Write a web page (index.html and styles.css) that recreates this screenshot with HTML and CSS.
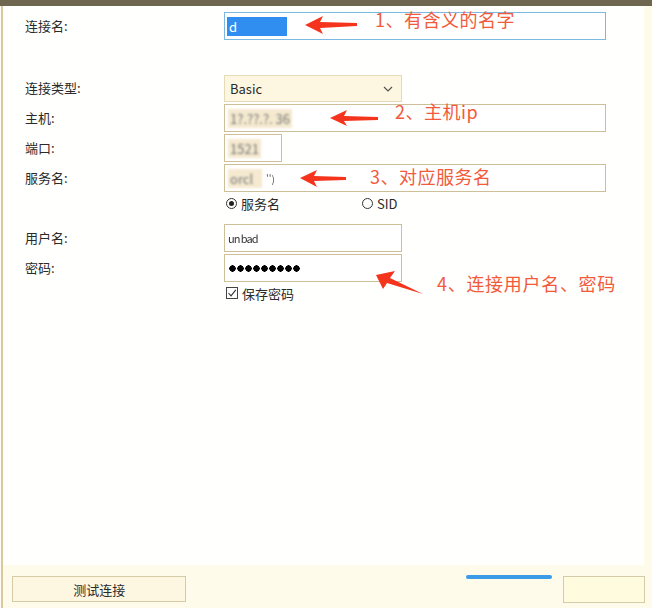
FILE: index.html
```html
<!DOCTYPE html>
<html lang="zh-CN">
<head>
  <meta charset="utf-8" />
  <title>新建连接</title>
  <link rel="stylesheet" href="styles.css">
</head>
<body>
  <div class="topbar"></div>
  <div class="window">
    <div class="panel">
      <form class="form">
        <div class="row first">
          <label>连接名:</label>
          <div class="field wide focus"><span class="sel">d</span></div>
        </div>

        <div class="row gap-big">
          <label>连接类型:</label>
          <div class="field select">
            <span>Basic</span>
            <svg class="chev" width="10" height="6" viewBox="0 0 10 6"><path d="M1 1 L5 5 L9 1" fill="none" stroke="#555" stroke-width="1.2"/></svg>
          </div>
        </div>
        <div class="row">
          <label>主机:</label>
          <div class="field wide"><span class="blur">1?.??.?. 36</span></div>
        </div>
        <div class="row">
          <label>端口:</label>
          <div class="field port"><span class="blur">1521</span></div>
        </div>
        <div class="row">
          <label>服务名:</label>
          <div class="field wide"><span class="blur short">orcl</span><span class="tick">'')</span></div>
        </div>
        <div class="row opts">
          <label></label>
          <div class="choices">
            <span class="radio on"></span><span class="opt">服务名</span>
            <span class="radio sid"></span><span class="opt">SID</span>
          </div>
        </div>

        <div class="row gap-mid">
          <label>用户名:</label>
          <div class="field mid"><span class="user">un bad</span></div>
        </div>
        <div class="row">
          <label>密码:</label>
          <div class="field mid"><span class="dots"></span></div>
        </div>
        <div class="row opts">
          <label></label>
          <div class="choices">
            <span class="check"><svg width="10" height="10" viewBox="0 0 10 10"><path d="M1.5 5 L4 7.8 L8.8 1.8" fill="none" stroke="#333" stroke-width="1.1"/></svg></span><span class="opt">保存密码</span>
          </div>
        </div>
      </form>
    </div>
    <div class="strip"></div>
  </div>

  <div class="footer">
    <button class="btn test">测试连接</button>
    <div class="progress"></div>
    <button class="btn ok"></button>
  </div>

  <svg class="notes" width="652" height="608" viewBox="0 0 652 608">
    <g fill="#f4341c">
      <polygon points="305,25 323,16 320,22 357,23 357,26 320,28 323,34"/>
      <polygon points="330,118 347,110 344,116 378,117 378,120 344,121 347,126"/>
      <polygon points="300,178 317,170 314,176 346,177 346,180 314,181 317,187"/>
      <polygon points="376,275 395,271 390,278 423,294 387,283 383,289"/>
    </g>
    <g class="note-text" fill="#f25a3c">
      <text x="375" y="27">1、有含义的名字</text>
      <text x="395" y="119">2、主机ip</text>
      <text x="370" y="184">3、对应服务名</text>
      <text x="437" y="291" class="wide-note">4、连接用户名、密码</text>
    </g>
  </svg>
</body>
</html>
```

FILE: styles.css
```css
:root{
  --label-col:199px;
  --border:#cdbf98;
  --cream:#fdf6e0;
  --text:#2a2a2a;
}

html,body{height:100%}
body{
  margin:0; width:652px; height:608px; overflow:hidden; position:relative;
  font-family:"Noto Sans CJK SC","Noto Sans",sans-serif;
  font-size:13px; color:var(--text);
  background:#fffdf6;
  display:flex; flex-direction:column;
}

.topbar{ height:6px; background:#6f6650; flex:none; }

.window{
  flex:1; display:flex;
  border-left:2px solid #d9c99c; margin-left:1px;
  background:#fffffd;
}
.panel{ flex:1; }
.strip{ width:8px; background:#fffbea; }

.form{ display:flex; flex-direction:column; padding:6px 0 0 22px; gap:2px; }

.row{ display:grid; grid-template-columns:var(--label-col) 1fr; align-items:center; }
.row label{ line-height:28px; }
.row.gap-big{ margin-top:32px; }
.row.gap-mid{ margin-top:9px; }
.row.opts{ height:20px; margin-top:-1px; }

.field{
  height:28px; box-sizing:border-box;
  border:1px solid var(--border); background:#fff;
  display:flex; align-items:center; padding:0 3px;
}
.field.wide{ width:382px; }
.field.mid{ width:178px; }
.field.port{ width:58px; }
.field.focus{ border-color:#7cb9e2; padding:0 2px; }
.field.select{
  width:178px; height:27px; background:var(--cream); border-color:#e6dbb8;
  justify-content:space-between; padding:0 8px 0 5px;
}
.chev{ margin-top:1px; }

.sel{
  display:inline-block; width:58px; height:19px; line-height:19px;
  background:#2f8ef0; color:#fff; padding-left:2px;
}
.blur{
  color:#777; filter:blur(1.3px); background:#f5ead0; padding:0 2px;
}
.blur.short{ width:30px; overflow:hidden; }
.tick{ color:#555; margin-left:4px; font-size:10px; filter:blur(.4px); }
.user{ color:#333; font-size:11px; filter:blur(.5px); letter-spacing:-1px; }
.dots{
  width:72px; height:7px; margin-left:1px;
  background:radial-gradient(circle at 3.5px 3.5px, #000 3px, transparent 3.4px) 0 0 / 8px 7px repeat-x;
}

.choices{ display:flex; align-items:center; padding-left:2px; }
.opt{ margin-left:4px; }
.radio{
  width:11px; height:11px; border:1px solid #333; border-radius:50%;
  box-sizing:border-box; display:inline-block; position:relative; background:#fff;
}
.radio.on::after{
  content:""; position:absolute; left:2px; top:2px; width:5px; height:5px;
  border-radius:50%; background:#222;
}
.radio.sid{ margin-left:82px; }
.check{
  width:12px; height:12px; border:1px solid #444; box-sizing:border-box;
  display:inline-flex; align-items:center; justify-content:center; background:#fff;
}

.footer{
  height:43px; flex:none; background:#fffbeb;
  display:flex; align-items:flex-start; padding:11px 7px 0 12px; box-sizing:border-box;
  border-left:2px solid #d9c99c; margin-left:1px;
}
.btn{
  height:26px; box-sizing:border-box; border:1px solid #d6cba8; background:var(--cream);
  font-family:inherit; font-size:13px; color:var(--text); padding:0;
}
.btn.test{ width:175px; margin-left:-3px; }
.btn.ok{ width:82px; height:27px; background:#fffbdf; margin-left:11px; }
.progress{
  width:86px; height:4px; border-radius:2px; background:#3a9be6;
  margin-left:280px; margin-top:-1px;
}

.notes{ position:absolute; left:0; top:0; pointer-events:none; }
.note-text text{ font-family:"Noto Sans CJK SC",sans-serif; font-size:18px; letter-spacing:.5px; }
.note-text .wide-note{ letter-spacing:.7px; }
```
